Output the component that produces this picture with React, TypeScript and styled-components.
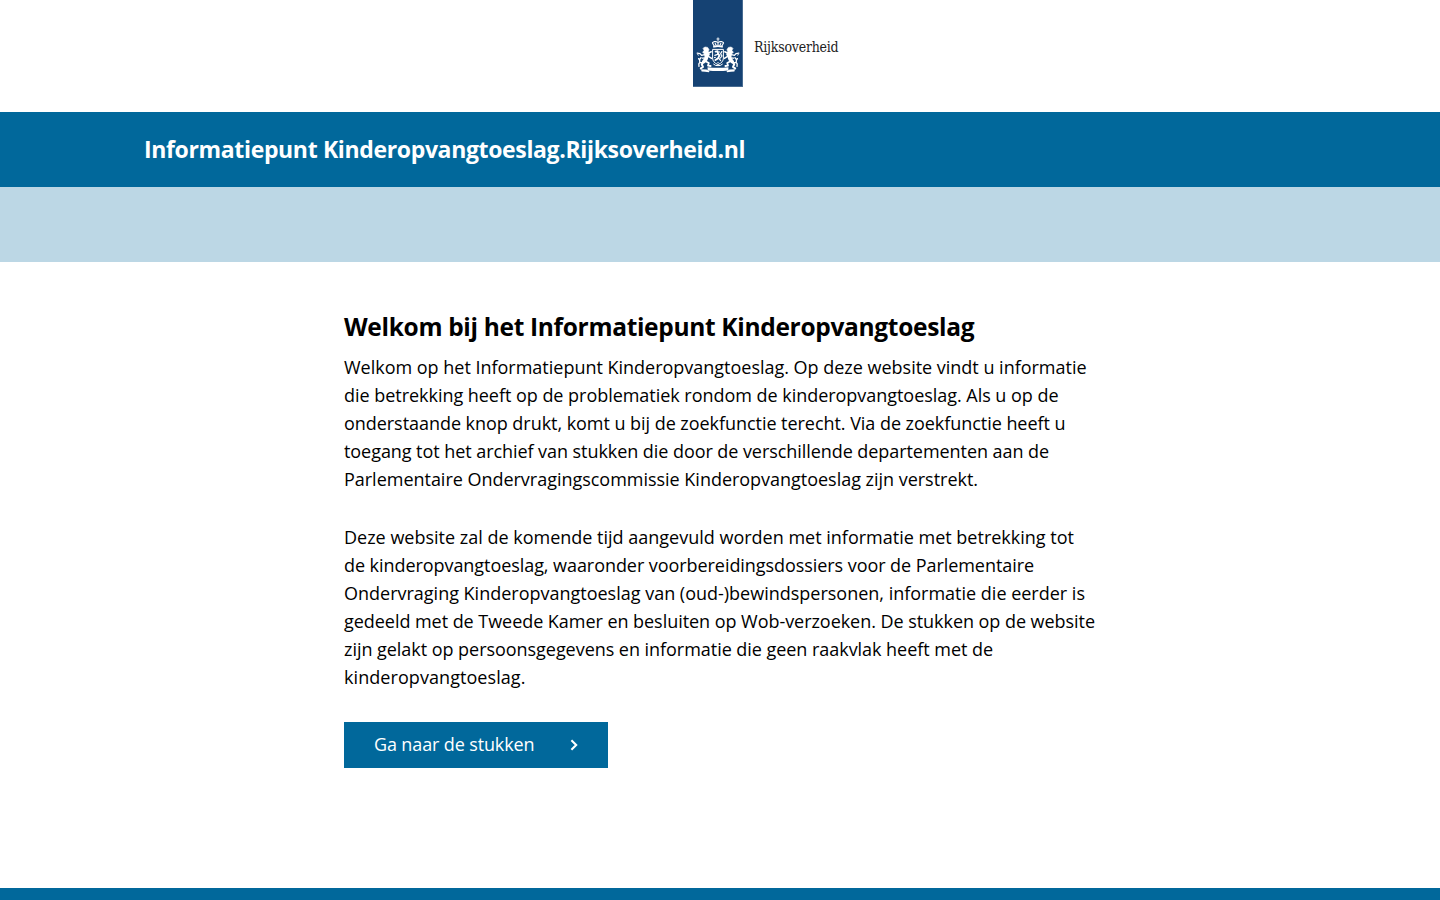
import React from "react";
import styled, { createGlobalStyle } from "styled-components";

const colors = {
  primary: "#01689b",
  light: "#bcd7e5",
  emblem: "#154273",
};

const GlobalStyle = createGlobalStyle`
  * { box-sizing: border-box; }
  body {
    margin: 0;
    background: #fff;
    color: #000;
    font-family: "Open Sans", "Noto Sans", sans-serif;
    font-size: 18px;
    line-height: 28px;
  }
`;

const Page = styled.div`
  height: 100vh;
  min-height: 900px;
  display: flex;
  flex-direction: column;
  overflow: hidden;
`;

const LogoBar = styled.header`
  flex: none;
  height: 112px;
  padding-left: 693px;
  display: flex;
  gap: 11px;
`;

const Emblem = styled.svg`
  display: block;
  width: 50px;
  height: 87px;
`;

const Wordmark = styled.span`
  margin-top: 37px;
  font-family: "DejaVu Serif Condensed", "DejaVu Serif", serif;
  font-size: 14px;
  line-height: 20px;
  letter-spacing: -0.22px;
  color: #222;
  white-space: nowrap;
`;

const TitleBar = styled.div`
  flex: none;
  height: 75px;
  padding: 0 144px 2px;
  display: flex;
  align-items: center;
  background: ${colors.primary};
  color: #fff;
`;

const SiteTitle = styled.span`
  font-size: 23px;
  font-weight: 700;
  letter-spacing: -0.35px;
  white-space: nowrap;
`;

const SubBar = styled.div`
  flex: none;
  height: 75px;
  background: ${colors.light};
`;

const Main = styled.main`
  flex: 1;
  width: 752px;
  margin: 0 auto;
  padding-top: 48px;
`;

const Heading = styled.h1`
  margin: 0 0 9px;
  font-size: 24.5px;
  font-weight: 700;
  line-height: 34px;
  letter-spacing: -0.32px;
  white-space: nowrap;
`;

const Paragraph = styled.p`
  margin: 0 0 30px;
`;

const Line = styled.span<{ $spacing: number }>`
  display: block;
  white-space: nowrap;
  letter-spacing: ${(p) => p.$spacing}px;
`;

const Button = styled.a`
  display: flex;
  align-items: center;
  justify-content: space-between;
  width: 264px;
  height: 46px;
  margin-top: 31px;
  padding: 0 30px;
  background: ${colors.primary};
  color: #fff;
  letter-spacing: -0.13px;
  text-decoration: none;
`;

const ButtonLabel = styled.span`
  padding-bottom: 2px;
`;

const Chevron = styled.svg`
  display: block;
  width: 8px;
  height: 12px;
`;

const Footer = styled.footer`
  flex: none;
  height: 12px;
  background: ${colors.primary};
`;

const intro: [string, number][] = [
  ["Welkom op het Informatiepunt Kinderopvangtoeslag. Op deze website vindt u informatie", -0.013],
  ["die betrekking heeft op de problematiek rondom de kinderopvangtoeslag. Als u op de", -0.034],
  ["onderstaande knop drukt, komt u bij de zoekfunctie terecht. Via de zoekfunctie heeft u", -0.046],
  ["toegang tot het archief van stukken die door de verschillende departementen aan de", -0.062],
  ["Parlementaire Ondervragingscommissie Kinderopvangtoeslag zijn verstrekt.", -0.021],
];

const details: [string, number][] = [
  ["Deze website zal de komende tijd aangevuld worden met informatie met betrekking tot", -0.001],
  ["de kinderopvangtoeslag, waaronder voorbereidingsdossiers voor de Parlementaire", -0.061],
  ["Ondervraging Kinderopvangtoeslag van (oud-)bewindspersonen, informatie die eerder is", -0.005],
  ["gedeeld met de Tweede Kamer en besluiten op Wob-verzoeken. De stukken op de website", -0.046],
  ["zijn gelakt op persoonsgegevens en informatie die geen raakvlak heeft met de", -0.042],
  ["kinderopvangtoeslag.", 0.068],
];

const Lion = () => (
  <g fill="none" stroke="#fff" strokeLinecap="round" strokeLinejoin="round">
    {/* head and mane */}
    <path d="M10.2 48.2 L12 47 L14.6 47.4 L16 49.6 L15.2 52 L16.6 54.4 L14.8 57.4 L12 57 L11.2 53.8 L9.6 52.2 L11 50.6 Z" fill="#fff" strokeWidth="0.6" />
    {/* body and legs */}
    <path d="M14 55.5 L13 59 L10.8 61.6" strokeWidth="3.6" />
    <path d="M12.6 61.2 L15.8 63 L15 65.6 L17.6 66" strokeWidth="1.8" />
    <path d="M10.4 62 L8.8 64.4 L10 67 L7.8 68.4" strokeWidth="2" />
    <path d="M15.6 53 L18.2 51.8 M15.8 56.6 L18.6 58.4" strokeWidth="1.5" />
    <path d="M11.6 54.6 L8.6 55.4 L7 53.6 L4.2 53.2 M12 58 L9.4 58.2" strokeWidth="1.3" />
    {/* tail */}
    <path d="M9.4 63 L6.8 62.4 L6.6 59.6 L8 57.6 M6.6 60 L5.6 58.6 M7 62.2 L5.8 63.8 L6 66.4" strokeWidth="1.3" />
    <path d="M5.2 55.2 L4.8 54.4" strokeWidth="1" />
  </g>
);

const CoatOfArms = () => (
  <Emblem viewBox="0 0 50 87" aria-label="Rijkswapen">
    <rect width="50" height="87" fill={colors.emblem} />
    <path d="M49.7 0 V86.7 H0" fill="none" stroke="#7f97b3" strokeWidth="0.6" />
    {/* crown */}
    <g fill="none" stroke="#fff" strokeLinecap="round">
      <path d="M25 37.8 V41 M23.9 39 H26.1" strokeWidth="0.9" />
      <path d="M21.2 46 L19.4 42.8 Q21.4 40.6 24.4 42.2 M28.8 46 L30.6 42.8 Q28.6 40.6 25.6 42.2" strokeWidth="1.2" strokeDasharray="1.5 0.5" />
      <path d="M25 42 V45.4 M22.2 43.4 L23.2 45.6 M27.8 43.4 L26.8 45.6" strokeWidth="1.1" />
      <path d="M21 46.7 Q25 45.6 29 46.7" strokeWidth="1.9" />
    </g>
    <Lion />
    <g transform="translate(50 0) scale(-1 1)">
      <Lion />
    </g>
    {/* shield with its lion */}
    <path d="M19.6 49.4 H30.4 V58 Q30.4 62.4 25 64.6 Q19.6 62.4 19.6 58 Z" fill={colors.emblem} stroke="#fff" strokeWidth="1" />
    <g fill="none" stroke="#fff" strokeLinecap="round" strokeLinejoin="round">
      <path d="M22.6 51.6 L24.6 51.2 L25 53.4 L26.4 55.6 L25 58.4 L22.4 60" strokeWidth="1.9" />
      <path d="M24.6 54.4 L21.8 55.4 M25.6 58 L27.6 60.6 M27.4 58 L29 56 L27.6 53.8 L28.8 51.6" strokeWidth="1.2" />
      <path d="M21.4 57.6 L22.4 57.4 M26.2 51.6 V52.4 M25 62.4 V62.8" strokeWidth="1" />
      <path d="M20.6 64.2 Q22.8 66.2 25 65.6 Q27.2 66.2 29.4 64.2" strokeWidth="1" />
    </g>
    {/* motto ribbon */}
    <path d="M14.6 67.2 Q25 68.4 35.4 67.2 L35.4 70.4 Q25 71.4 14.6 70.4 Z" fill="#fff" />
    <path d="M8 69.2 L13.4 69.4 L16.4 71 L16 72.2 L12 71.8 L8.6 71.6 Z M42 69.2 L36.6 69.4 L33.6 71 L34 72.2 L38 71.8 L41.4 71.6 Z" fill="#fff" />
  </Emblem>
);

const TextBlock = ({ lines }: { lines: [string, number][] }) => (
  <Paragraph>
    {lines.map(([text, spacing]) => (
      <Line key={text} $spacing={spacing}>
        {text}
      </Line>
    ))}
  </Paragraph>
);

export default function App() {
  return (
    <>
      <GlobalStyle />
      <Page>
        <LogoBar>
          <CoatOfArms />
          <Wordmark>Rijksoverheid</Wordmark>
        </LogoBar>
        <TitleBar>
          <SiteTitle>Informatiepunt Kinderopvangtoeslag.Rijksoverheid.nl</SiteTitle>
        </TitleBar>
        <SubBar />
        <Main>
          <Heading>Welkom bij het Informatiepunt Kinderopvangtoeslag</Heading>
          <TextBlock lines={intro} />
          <TextBlock lines={details} />
          <Button>
            <ButtonLabel>Ga naar de stukken</ButtonLabel>
            <Chevron viewBox="0 0 8 12">
              <path d="M1.4 1.2 L6.2 6 L1.4 10.8" fill="none" stroke="#fff" strokeWidth="2.1" />
            </Chevron>
          </Button>
        </Main>
        <Footer />
      </Page>
    </>
  );
}
